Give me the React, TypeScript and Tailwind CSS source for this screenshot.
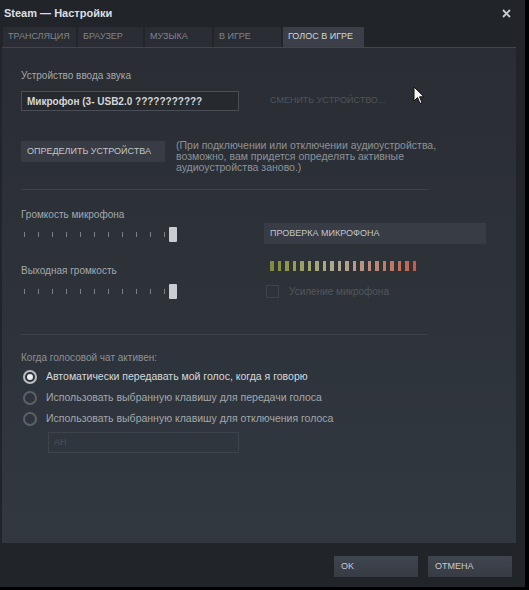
import React from 'react'

const tabs = [
  { label: 'ТРАНСЛЯЦИЯ', w: 'w-[73px]' },
  { label: 'БРАУЗЕР', w: 'w-[65px]' },
  { label: 'МУЗЫКА', w: 'w-[67px]' },
  { label: 'В ИГРЕ', w: 'w-[67px]' },
  { label: 'ГОЛОС В ИГРЕ', w: 'w-[81px]', active: true },
]

const meter = [
  '#7f8c3c', '#86923f', '#8d9748', '#949c55', '#9aa062', '#a0a46e', '#a5a77a', '#a9a983',
  '#ada98a', '#b0a68c', '#b4a08a', '#b89a86', '#bb9380', '#bd8c79', '#bf8571', '#c07e69',
  '#c17761', '#c2705a', '#c36853', '#c85a4c',
]

function Slider() {
  return (
    <div className="flex items-center h-[16px] pl-[3px]">
      <div className="flex items-center gap-[13px]">
        {Array.from({ length: 11 }).map((_, i) => (
          <div key={i} className="w-px h-[5px] bg-[#7c8188]" />
        ))}
      </div>
      <div className="ml-[4px] w-[8px] h-[15px] bg-[#c9ccd1] rounded-[1px]" />
    </div>
  )
}

function Radio({ checked, children }: { checked?: boolean; children: React.ReactNode }) {
  return (
    <div className="flex items-center h-[21px] pl-[2px]">
      <div
        className={
          checked
            ? 'w-[14px] h-[14px] rounded-full border-2 border-[#b9bdc2] flex items-center justify-center'
            : 'w-[14px] h-[14px] rounded-full border-2 border-[#5c6168]'
        }
      >
        {checked && <div className="w-[6px] h-[6px] rounded-full bg-[#eceef0]" />}
      </div>
      <span
        className={
          checked
            ? 'ml-[9px] text-[10.5px] text-[#d6d9dc]'
            : 'ml-[9px] text-[10.5px] text-[#a3a7ac]'
        }
      >
        {children}
      </span>
    </div>
  )
}

export default function App() {
  return (
    <div className="w-[529px] h-[590px] bg-black" style={{ fontFamily: '"Liberation Sans", Arial, sans-serif' }}>
      <div className="relative w-[525px] h-[587px] bg-[#212429] flex flex-col">
        {/* Title */}
        <div className="h-[27px] flex items-center justify-between pl-[4px] pr-[14px]">
          <span className="text-[11px] font-bold text-[#dcdfe2]">Steam — Настройки</span>
          <svg width="9" height="9" viewBox="0 0 9 9">
            <path d="M1 1L8 8M8 1L1 8" stroke="#c9ccd0" strokeWidth="1.8" />
          </svg>
        </div>

        {/* Tabs */}
        <div className="h-[20px] flex gap-[2px] pl-[3px]">
          {tabs.map((t) => (
            <div
              key={t.label}
              className={
                t.active
                  ? `${t.w} bg-[#3b4048] flex items-center pl-[5px] text-[9px] text-[#d2d5d8]`
                  : `${t.w} bg-[#2a2d33] flex items-center pl-[5px] text-[9px] text-[#7f848b]`
              }
            >
              {t.label}
            </div>
          ))}
        </div>

        {/* Panel */}
        <div className="ml-[2px] mr-[9px] h-[496px] border-t border-[#41464e] bg-gradient-to-b from-[#2a2d33] to-[#313840] pl-[19px]">
          <div className="pt-[20px] text-[10px] text-[#a4a8ad] h-[32px]">Устройство ввода звука</div>
          <div className="mt-[11px] flex items-center">
            <div className="w-[218px] h-[20px] border border-[#4a4f57] bg-[#26292e] flex items-center pl-[5px] text-[10px] font-bold text-[#d4d7da]">
              Микрофон (3- USB2.0 ???????????
            </div>
            <span className="ml-[31px] text-[9px] text-[#4f545b]">СМЕНИТЬ УСТРОЙСТВО...</span>
          </div>

          <div className="mt-[30px] flex items-start h-[36px]">
            <div className="w-[144px] h-[21px] bg-[#383c44] flex items-center pl-[6px] text-[9px] text-[#c2c6ca]">
              ОПРЕДЕЛИТЬ УСТРОЙСТВА
            </div>
            <p className="ml-[11px] mt-[-1px] whitespace-nowrap text-[10.5px] leading-[11px] text-[#8d9298]">
              (При подключении или отключении аудиоустройства,
              <br />
              возможно, вам придется определять активные
              <br />
              аудиоустройства заново.)
            </p>
          </div>

          <div className="mt-[12px] w-[407px] h-px bg-[#3d4148]" />

          <div className="flex">
            <div className="w-[243px]">
              <div className="mt-[17px] h-[12px] text-[10px] text-[#a4a8ad]">Громкость микрофона</div>
              <div className="mt-[7px]">
                <Slider />
              </div>
              <div className="mt-[21px] h-[12px] text-[10px] text-[#a4a8ad]">Выходная громкость</div>
              <div className="mt-[8px]">
                <Slider />
              </div>
            </div>
            <div>
              <div className="mt-[33px] w-[222px] h-[21px] bg-[#383c44] flex items-center pl-[6px] text-[9px] text-[#c2c6ca]">
                ПРОВЕРКА МИКРОФОНА
              </div>
              <div className="mt-[17px] pl-[6px] flex gap-[4px]">
                {meter.map((c, i) => (
                  <div key={i} className="w-[3.5px] h-[10px]" style={{ background: c }} />
                ))}
              </div>
              <div className="mt-[13px] pl-[2px] flex items-center">
                <div className="w-[13px] h-[13px] border border-[#3f434a]" />
                <span className="ml-[10px] text-[10px] text-[#52575e]">Усиление микрофона</span>
              </div>
            </div>
          </div>

          <div className="mt-[35px] w-[407px] h-px bg-[#3d4148]" />

          <div className="mt-[15px] h-[12px] text-[10px] text-[#8c9197]">Когда голосовой чат активен:</div>
          <div className="mt-[4px] flex flex-col">
            <Radio checked>Автоматически передавать мой голос, когда я говорю</Radio>
            <Radio>Использовать выбранную клавишу для передачи голоса</Radio>
            <Radio>Использовать выбранную клавишу для отключения голоса</Radio>
          </div>
          <div className="mt-[3px] ml-[27px] w-[191px] h-[21px] border border-[#3f434a] flex items-center pl-[5px] text-[9px] text-[#4c5158]">
            АН
          </div>
        </div>

        {/* Footer */}
        <div className="flex justify-end gap-[10px] pr-[13px] pt-[13px]">
          <div className="w-[84px] h-[21px] bg-gradient-to-b from-[#3f454e] to-[#373c44] flex items-center pl-[7px] text-[9px] text-[#c8ccd0]">
            OK
          </div>
          <div className="w-[84px] h-[21px] bg-gradient-to-b from-[#3f454e] to-[#373c44] flex items-center pl-[7px] text-[9px] text-[#c8ccd0]">
            ОТМЕНА
          </div>
        </div>

        {/* mouse cursor */}
        <svg className="absolute left-[413px] top-[86px]" width="12" height="19" viewBox="0 0 12 19">
          <path d="M1 1L1 15L4.5 11.5L7 17.5L9 16.6L6.6 10.8L11 10.8Z" fill="#f4f4f4" stroke="#111" strokeWidth="1" />
        </svg>
      </div>
    </div>
  )
}
